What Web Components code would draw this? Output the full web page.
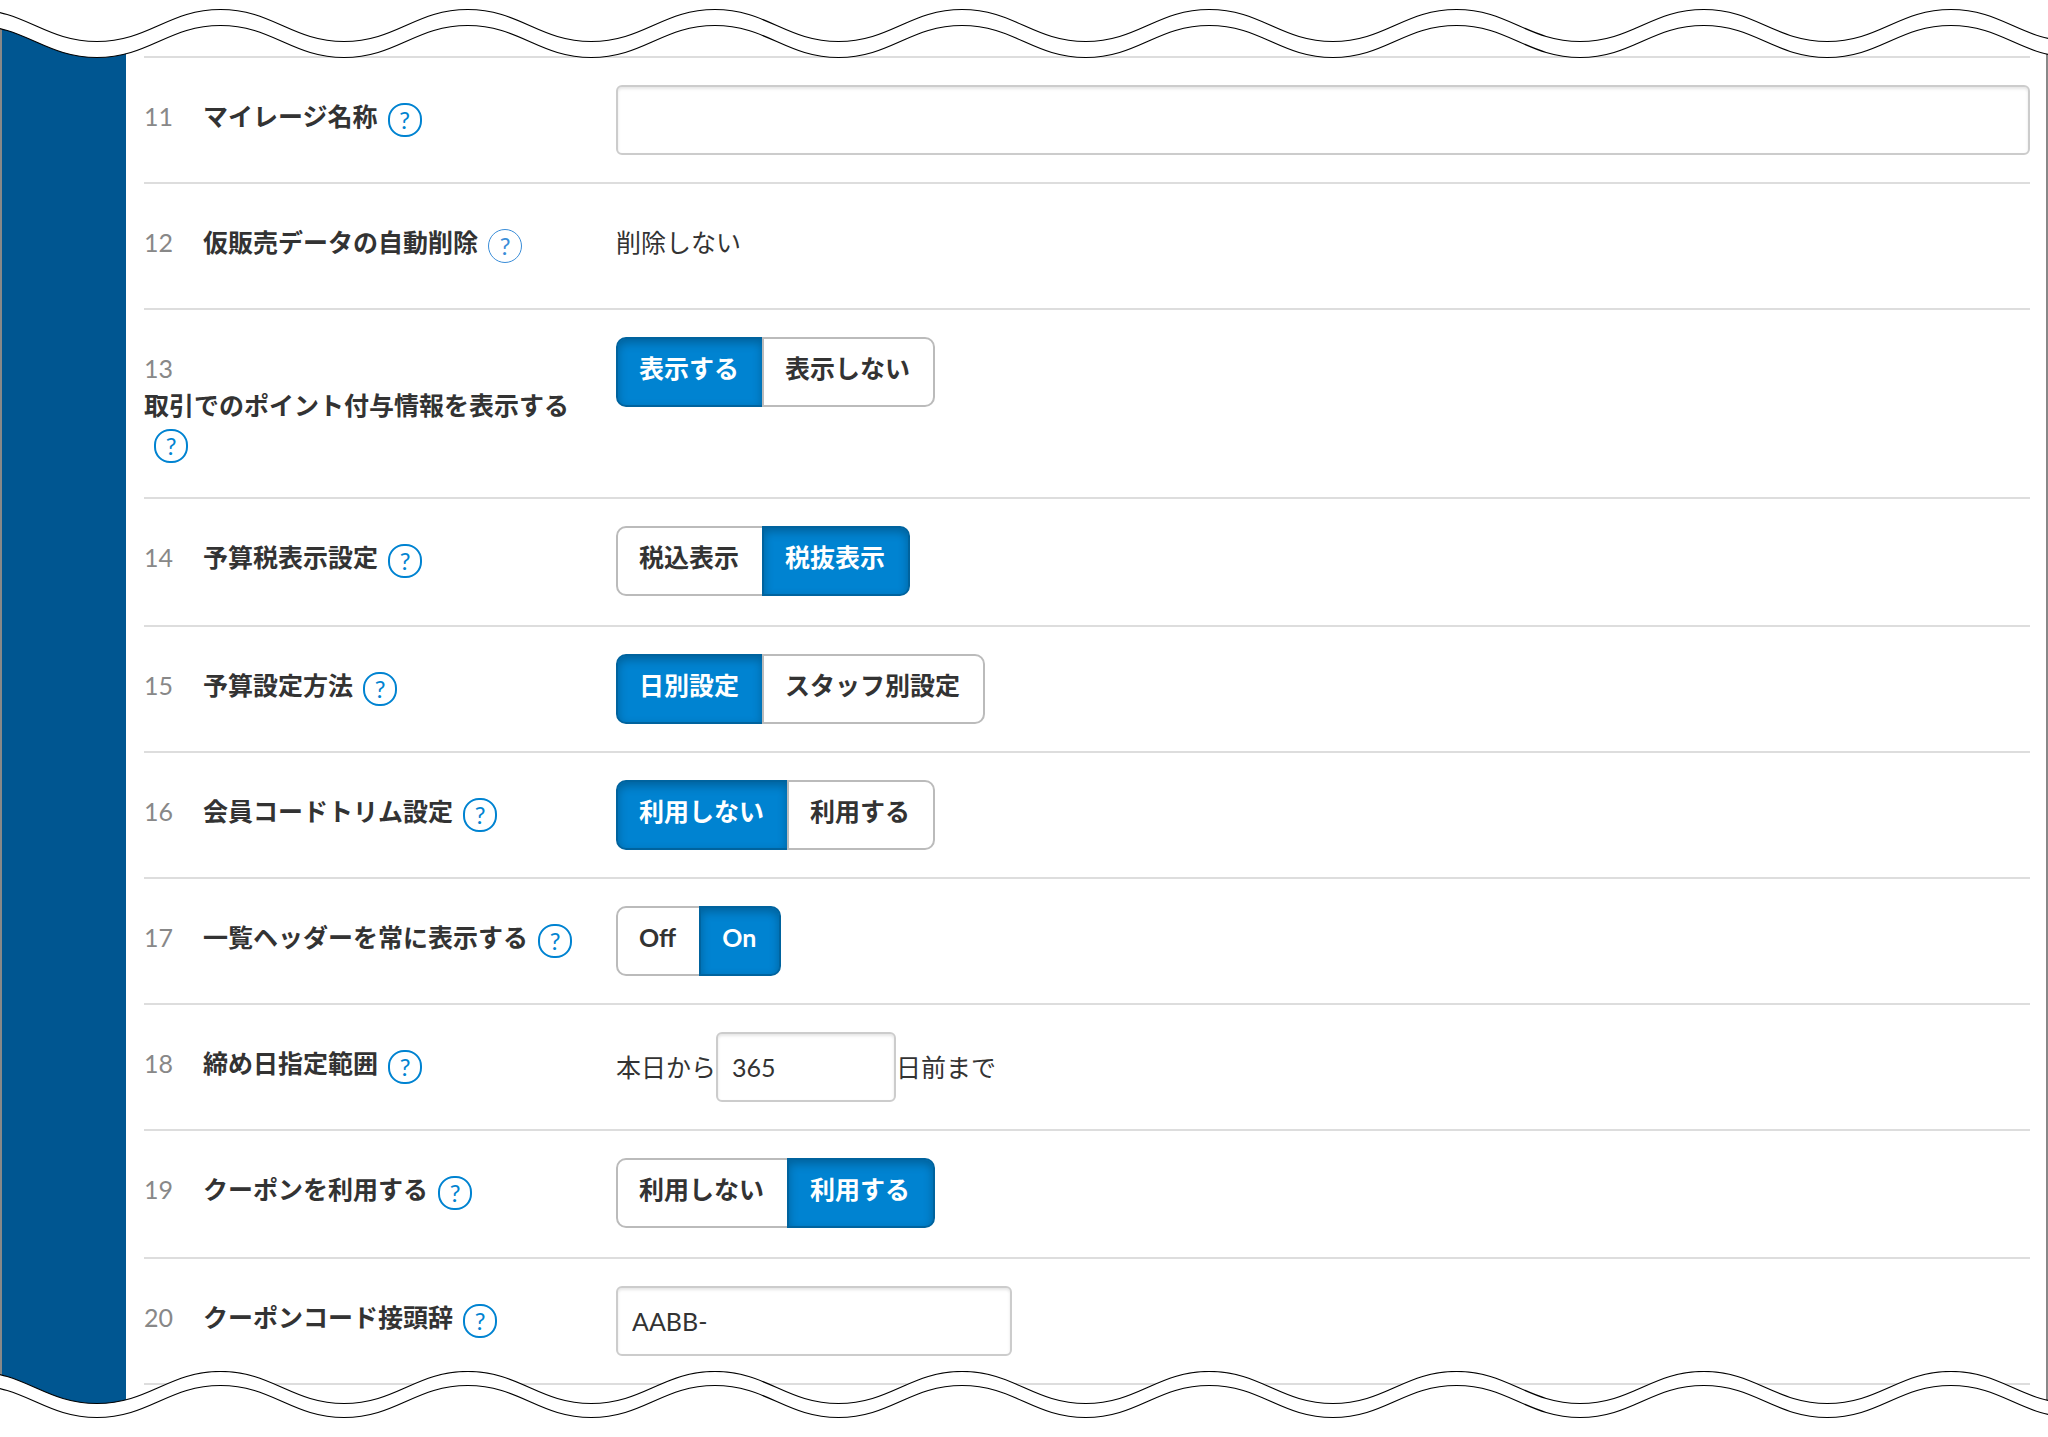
<!DOCTYPE html>
<html lang="ja">
<head>
<meta charset="utf-8">
<title>設定</title>
<style>
  body {
    margin: 0;
    background: #fff;
    color: #333;
    font: 25px/37px Lato, "Noto Sans CJK JP", sans-serif;
  }
</style>
</head>
<body>

<torn-page>
  <settings-list>
    <setting-row no="11">
      <label slot="label" for="mileage-name">マイレージ名称</label>
      <text-field id="mileage-name" label="マイレージ名称" size="full"></text-field>
    </setting-row>
    <setting-row no="12" thin>
      <span slot="label">仮販売データの自動削除</span>
      <plain-value>削除しない</plain-value>
    </setting-row>
    <setting-row no="13">
      <span slot="label" id="l13">取引でのポイント付与情報を表示する</span>
      <segmented-control aria-labelledby="l13" options="表示する,表示しない" selected="0"></segmented-control>
    </setting-row>
    <setting-row no="14">
      <span slot="label" id="l14">予算税表示設定</span>
      <segmented-control aria-labelledby="l14" options="税込表示,税抜表示" selected="1"></segmented-control>
    </setting-row>
    <setting-row no="15">
      <span slot="label" id="l15">予算設定方法</span>
      <segmented-control aria-labelledby="l15" options="日別設定,スタッフ別設定" selected="0"></segmented-control>
    </setting-row>
    <setting-row no="16">
      <span slot="label" id="l16">会員コードトリム設定</span>
      <segmented-control aria-labelledby="l16" options="利用しない,利用する" selected="0"></segmented-control>
    </setting-row>
    <setting-row no="17">
      <span slot="label" id="l17">一覧ヘッダーを常に表示する</span>
      <segmented-control aria-labelledby="l17" options="Off,On" selected="1"></segmented-control>
    </setting-row>
    <setting-row no="18">
      <label slot="label" for="close-range">締め日指定範囲</label>
      <span>本日から</span>
      <text-field id="close-range" label="締め日指定範囲" size="small" value="365"></text-field>
      <span>日前まで</span>
    </setting-row>
    <setting-row no="19">
      <span slot="label" id="l19">クーポンを利用する</span>
      <segmented-control aria-labelledby="l19" options="利用しない,利用する" selected="1"></segmented-control>
    </setting-row>
    <setting-row no="20">
      <label slot="label" for="coupon-prefix">クーポンコード接頭辞</label>
      <text-field id="coupon-prefix" label="クーポンコード接頭辞" size="medium" value="AABB-"></text-field>
    </setting-row>
  </settings-list>
</torn-page>

<script>
  function shadow(host, html, options) {
    const root = host.attachShadow(Object.assign({ mode: "open" }, options));
    const t = document.createElement("template");
    t.innerHTML = html;
    root.appendChild(t.content.cloneNode(true));
    return root;
  }

  /* A wavy band that hides the edge of the page. edge="top" | "bottom" */
  customElements.define("wave-edge", class extends HTMLElement {
    connectedCallback() {
      if (this.shadowRoot) return;
      const top = this.getAttribute("edge") === "top";
      const height = 65;
      const half = 123.6, k = half * 0.42, amp = 32, periods = 20;
      const wave = (crest) => {
        let x = 220.5 - half * 4, d = `M${x} ${crest}`;
        for (let i = 0; i < periods * 2; i++) {
          const a = i % 2 ? crest + amp : crest;
          const b = i % 2 ? crest : crest + amp;
          d += `C${x + k} ${a} ${x + half - k} ${b} ${x + half} ${b}`;
          x += half;
        }
        return { d, x };
      };
      const outer = wave(top ? 9.5 : 14.5);
      const inner = wave(top ? 25.5 : 0.5);
      const far = top ? 0 : height;
      const start = 220.5 - half * 4;
      shadow(this, `
        <style>
          :host { display: block; height: ${height}px; overflow: hidden; pointer-events: none; }
          svg { display: block; width: 100%; height: 100%; }
          .mask { fill: #fff; }
          .line { fill: none; stroke: #000; stroke-width: 1.2; }
        </style>
        <svg aria-hidden="true">
          <path class="mask" d="${inner.d}L${inner.x} ${far}L${start} ${far}Z"/>
          <path class="line" d="${inner.d}"/>
          <path class="line" d="${outer.d}"/>
        </svg>`);
    }
  });

  customElements.define("torn-page", class extends HTMLElement {
    connectedCallback() {
      if (this.shadowRoot) return;
      shadow(this, `
        <style>
          :host { display: block; position: relative; overflow: hidden; }
          .frame { display: flex; border: 0 solid #888; border-width: 0 2px; }
          nav { flex: 0 0 124px; background: #005691; }
          main { flex: 1; min-width: 0; padding: 56px 16px 51px 18px; }
          wave-edge { position: absolute; left: 0; right: 0; }
          [edge=top] { top: 0; }
          [edge=bottom] { bottom: 0; }
        </style>
        <div class="frame">
          <nav></nav>
          <main><slot></slot></main>
        </div>
        <wave-edge edge="top"></wave-edge>
        <wave-edge edge="bottom"></wave-edge>`);
    }
  });

  customElements.define("settings-list", class extends HTMLElement {
    connectedCallback() {
      if (this.shadowRoot) return;
      shadow(this, `
        <style>
          :host { display: block; border-bottom: 2px solid #ddd; }
          ::slotted(:nth-child(5n+4)) { padding-bottom: 2px; }
        </style>
        <slot></slot>`);
    }
  });

  customElements.define("help-button", class extends HTMLElement {
    connectedCallback() {
      if (this.shadowRoot) return;
      shadow(this, `
        <style>
          :host { display: inline-block; vertical-align: -3px; margin-left: 10px; }
          button {
            display: flex; align-items: center; justify-content: center;
            box-sizing: border-box; width: 34px; height: 34px; padding: 0;
            border: 2px solid #0083d1; border-radius: 16px;
            background: none; color: #0083d1; font: 24px/30px Lato, sans-serif;
          }
          :host([thin]) button { border-width: 1px; border-radius: 50%; border-color: #3a8dd8; color: #3a8dd8; }
        </style>
        <button type="button">?</button>`);
    }
  });

  customElements.define("setting-row", class extends HTMLElement {
    connectedCallback() {
      if (this.shadowRoot) return;
      shadow(this, `
        <style>
          :host {
            display: grid; grid-template-columns: 440px 1fr; column-gap: 32px;
            box-sizing: border-box; min-height: 126px; border-top: 2px solid #ddd;
          }
          .head { padding: 40px 0 34px; }
          .no { display: inline-block; width: 59px; color: #888; }
          .label { display: inline-block; font-weight: 700; }
          .body { display: flex; align-items: center; align-self: start; padding: 27px 0; min-height: 70px; }
        </style>
        <div class="head"><span class="no">${this.getAttribute("no")}</span><span class="label"><slot name="label"></slot><help-button ${this.hasAttribute("thin") ? "thin" : ""}></help-button></span></div>
        <div class="body"><slot></slot></div>`);
    }
  });

  customElements.define("plain-value", class extends HTMLElement {
    connectedCallback() {
      if (this.shadowRoot) return;
      shadow(this, `
        <style>:host { display: block; padding-bottom: 8px; }</style>
        <slot></slot>`);
    }
  });

  customElements.define("text-field", class extends HTMLElement {
    static formAssociated = true;
    connectedCallback() {
      if (this.shadowRoot) return;
      const root = shadow(this, `
        <style>
          :host { display: block; width: 180px; }
          :host([size=medium]) { width: 396px; }
          :host([size=full]) { width: 100%; }
          input {
            display: block; box-sizing: border-box; width: 100%; height: 70px;
            padding: 0 14px; border: 2px solid #ccc; border-radius: 6px;
            background: #fff; color: #333; font: inherit; outline: none;
            box-shadow: inset 0 2px 3px rgba(0, 0, 0, .1);
          }
        </style>
        <input type="text">`, { delegatesFocus: true });
      const input = root.querySelector("input");
      input.value = this.getAttribute("value") || "";
      input.setAttribute("aria-label", this.getAttribute("label"));
    }
  });

  customElements.define("segmented-control", class extends HTMLElement {
    connectedCallback() {
      if (this.shadowRoot) return;
      this.setAttribute("role", "group");
      const selected = Number(this.getAttribute("selected"));
      const buttons = this.getAttribute("options").split(",")
        .map((text, i) => `<button type="button" aria-pressed="${i === selected}">${text}</button>`).join("");
      const root = shadow(this, `
        <style>
          :host { display: flex; }
          button {
            box-sizing: border-box; height: 70px; padding: 0 23px 8px 21px;
            border: 2px solid #bbb; background: #fff; color: #333;
            font: inherit; font-weight: 700; white-space: nowrap;
          }
          button + button { margin-left: -2px; }
          button:first-of-type { border-radius: 10px 0 0 10px; }
          button:last-of-type { border-radius: 0 10px 10px 0; }
          [aria-pressed=true] {
            border-color: #00639e; background: #0083d1; color: #fff;
            box-shadow: inset 0 4px 10px rgba(0, 0, 0, .25);
          }
        </style>${buttons}`);
      const all = root.querySelectorAll("button");
      all.forEach(b => b.addEventListener("click", () =>
        all.forEach(o => o.setAttribute("aria-pressed", String(o === b)))));
    }
  });
</script>
</body>
</html>
